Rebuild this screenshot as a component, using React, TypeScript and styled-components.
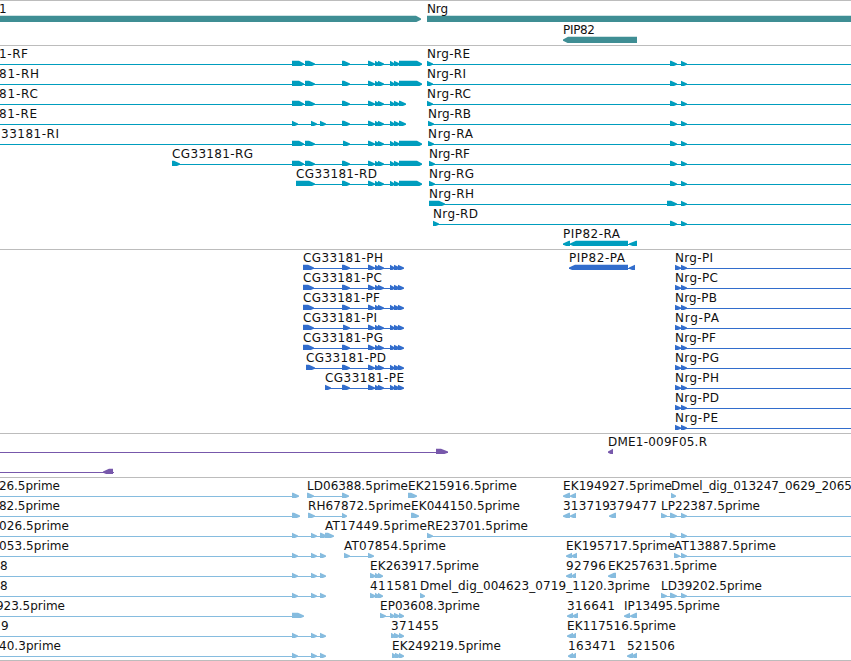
import React from "react";
import styled, { createGlobalStyle } from "styled-components";

const GlobalStyle = createGlobalStyle`
  body {
    margin: 0;
    background: #ffffff;
    overflow: hidden;
  }
`;
const Browser = styled.main`
  display: flex;
  flex-direction: column;
  width: 851px;
  height: 660px;
  overflow: hidden;
  border-bottom: 1px solid #bcbcbc;
`;
const Track = styled.section<{ $color: string; $pad: number }>`
  display: flex;
  flex-direction: column;
  border-top: 1px solid #bcbcbc;
  padding-bottom: ${(p) => p.$pad}px;
  color: ${(p) => p.$color};
`;
const Row = styled.svg<{ $height: number }>`
  display: block;
  width: 851px;
  height: ${(p) => p.$height}px;
  fill: currentColor;
`;
const Label = styled.text`
  font-family: "DejaVu Sans", sans-serif;
  font-size: 12px;
  fill: #111111;
`;

// start, end, optional length of the arrow head
type Span = number[];

type Feature = {
  label?: string;
  at?: number[];
  line?: number[];
  spans: Span[];
  left?: boolean;
};

type TrackData = {
  name: string;
  color: string;
  rowHeight: number;
  pad: number;
  rows: Feature[][];
};

const END = 860;

const feat = (label: string, from: number, to: number, spans: Span[], line?: number[], left = false): Feature => ({
  label,
  at: [from, to],
  spans,
  line,
  left,
});

const cluster = [[368, 375], [375, 380], [378, 384]];
const tail = [[390, 395], [394, 400]];
const utr = [399, 422, 5];
const first = [[292, 304, 5], [305, 315, 6]];
const mid = [342, 350];
const pair = [[670, 677], [681, 687]];
const full = [...first, mid, ...cluster, ...tail, utr];

const rna = (name: string, x: number, end: number, spans: Span[]) =>
  feat(name, x, end, spans, [0, spans[spans.length - 1][1] - 2]);
const nrg = (name: string, x: number, width: number, spans: Span[] = pair) =>
  feat(name, x, x + width, [[x, x + 6], ...spans], [x, END]);

const cdsTail = [...cluster, [390, 395], [394, 400], [398, 404]];
const cds = (name: string, x: number, end: number, head: number[], m = mid) =>
  feat(name, x, end, [head, m, ...cdsTail], [x, 402]);
const nrgCds = (name: string, end: number) =>
  feat(name, 675, end, [[675, 681], [681, 687]], [675, END]);

const est = [[292, 298], [311, 317], [320, 326]];
const edge = (name: string, x: number, end: number, spans: Span[] = est) =>
  feat(name, x, end, spans, [0, spans[spans.length - 1][1] - 1]);
const back = (name: string, x: number, end: number, spans: Span[]) =>
  feat(name, x, end, spans, undefined, true);

const tracks: TrackData[] = [
  {
    name: "genes",
    color: "#3f8e94",
    rowHeight: 21,
    pad: 2,
    rows: [
      [feat("1", -1, 7, [[0, 421, 5]]), feat("Nrg", 427, 448, [[427, END]])],
      [back("PIP82", 563, 595, [[563, 637, 5]])],
    ],
  },
  {
    name: "transcripts",
    color: "#009dbe",
    rowHeight: 20,
    pad: 3,
    rows: [
      [rna("1-RF", -1, 28, full), nrg("Nrg-RE", 427, 43)],
      [rna("81-RH", -1, 39, full), nrg("Nrg-RI", 427, 39)],
      [rna("81-RC", -1, 38, [...first, mid, ...cluster, ...tail, [399, 406]]), nrg("Nrg-RC", 427, 44)],
      [rna("81-RE", -1, 37, [...est, mid, ...cluster, ...tail, [399, 406]]), nrg("Nrg-RB", 428, 43)],
      [rna("33181-RI", 1, 59, [...first, [343, 350], ...cluster, ...tail, utr]), nrg("Nrg-RA", 428, 45)],
      [
        feat("CG33181-RG", 172, 253, [[172, 180], ...full], [172, 420]),
        nrg("Nrg-RF", 429, 41),
      ],
      [
        feat("CG33181-RD", 296, 377, [[296, 315, 6], mid, ...cluster, ...tail, utr], [296, 420]),
        nrg("Nrg-RG", 429, 45),
      ],
      [feat("Nrg-RH", 429, 474, [[429, 445], [667, 677], [681, 687]], [429, END])],
      [nrg("Nrg-RD", 433, 45)],
      [feat("PIP82-RA", 563, 620, [[563, 570], [570, 628], [629, 637, 7]], [563, 632], true)],
    ],
  },
  {
    name: "cds",
    color: "#326dcc",
    rowHeight: 20,
    pad: 3,
    rows: [
      [
        cds("CG33181-PH", 303, 383, [303, 314]),
        feat("PIP82-PA", 569, 625, [[569, 628], [629, 635]], [569, 632], true),
        nrgCds("Nrg-PI", 713),
      ],
      [cds("CG33181-PC", 303, 382, [303, 314]), nrgCds("Nrg-PC", 718)],
      [cds("CG33181-PF", 303, 380, [303, 314]), nrgCds("Nrg-PB", 717)],
      [cds("CG33181-PI", 303, 377, [303, 314], [343, 350]), nrgCds("Nrg-PA", 719)],
      [cds("CG33181-PG", 303, 383, [303, 314]), nrgCds("Nrg-PF", 716)],
      [cds("CG33181-PD", 306, 386, [306, 315]), nrgCds("Nrg-PG", 719)],
      [cds("CG33181-PE", 325, 404, [325, 331]), nrgCds("Nrg-PH", 719)],
      [nrgCds("Nrg-PD", 719)],
      [nrgCds("Nrg-PE", 718)],
    ],
  },
  {
    name: "insertions",
    color: "#7758ab",
    rowHeight: 20,
    pad: 3,
    rows: [
      [
        { spans: [[436, 448, 7]], line: [0, 448] },
        back("DME1-009F05.R", 608, 707, [[608, 613]]),
      ],
      [{ spans: [[103, 113, 6]], line: [0, 114], left: true }],
    ],
  },
  {
    name: "ests",
    color: "#86bcdf",
    rowHeight: 20,
    pad: 2,
    rows: [
      [
        edge("26.5prime", -1, 60, [[292, 299]]),
        feat("LD06388.5prime", 307, 408, [[307, 314], [342, 349]], [307, 346]),
        feat("EK215916.5prime", 408, 517, [[408, 417]]),
        back("EK194927.5prime", 563, 672, [[563, 570], [570, 576]]),
        feat("Dmel_dig_013247_0629_2065", 671, 852, [[671, 676]]),
      ],
      [
        edge("82.5prime", -1, 60, [[292, 300]]),
        feat("RH67872.5prime", 308, 411, [[308, 315], [342, 347]], [308, 346]),
        feat("EK044150.5prime", 411, 520, [[411, 419]]),
        back("313719", 563, 610, [[563, 570], [570, 576]]),
        back("379477", 609, 657, [[609, 616]]),
        feat("LP22387.5prime", 661, 760, [[661, 667], ...pair], [661, END]),
      ],
      [
        edge("026.5prime", -1, 69, [[292, 298], [311, 317], [320, 327], [325, 334]]),
        feat("AT17449.5prime", 325, 427, []),
        feat("RE23701.5prime", 427, 528, [[427, 433], ...pair], [427, END]),
      ],
      [
        edge("053.5prime", -1, 69),
        feat("AT07854.5prime", 344, 446, [[344, 350], [368, 374]], [344, 372]),
        back("EK195717.5prime", 566, 675, [[566, 572], [571, 577]]),
        feat("AT13887.5prime", 674, 776, [[674, 680], [681, 687]], [674, END]),
      ],
      [
        edge("8", 0, 8),
        feat("EK263917.5prime", 370, 479, [[370, 376], [375, 380], [378, 383]]),
        back("92796", 566, 606, [[566, 572], [571, 576]]),
        back("EK257631.5prime", 608, 717, [[608, 616]]),
      ],
      [
        edge("8", 0, 8),
        feat("411581", 370, 418, [[370, 376], [375, 380], [378, 383]]),
        feat("Dmel_dig_004623_0719_1120.3prime", 420, 650, [[420, 425]]),
        feat("LD39202.5prime", 661, 762, [[661, 667], ...pair], [661, END]),
      ],
      [
        edge("923.5prime", -4, 65, [[292, 304]]),
        feat("EP03608.3prime", 380, 480, [[380, 386], [390, 395], [394, 400], [399, 404]], [380, 402]),
        back("316641", 567, 615, [[567, 573], [572, 578]]),
        back("IP13495.5prime", 624, 720, [[624, 630], [630, 637]]),
      ],
      [
        edge("9", 1, 9),
        feat("371455", 391, 439, [[391, 396], [394, 400], [399, 404]]),
        back("EK117516.5prime", 567, 676, [[567, 573], [571, 576]]),
      ],
      [
        edge("40.3prime", -1, 61),
        feat("EK249219.5prime", 392, 501, [[392, 397], [395, 401], [399, 404]]),
        back("163471", 568, 616, [[568, 573], [571, 576]]),
        back("521506", 627, 675, [[627, 633], [631, 637]]),
      ],
    ],
  },
];

const Arrow = ({ span, left }: { span: Span; left?: boolean }) => {
  const [start, end, head = 6] = span;
  const h = Math.min(head, end - start);
  const points = left
    ? `${end},14.8 ${start + h},14.8 ${start},17.5 ${start},18.7 ${start + h},21.2 ${end},21.2`
    : `${start},14.8 ${end - h},14.8 ${end},17.5 ${end},18.7 ${end - h},21.2 ${start},21.2`;
  return <polygon points={points} />;
};

const FeatureGlyph = ({ feature }: { feature: Feature }) => {
  const { label, at, line, spans, left } = feature;
  return (
    <g>
      {line && <rect x={line[0]} y={18} width={line[1] - line[0]} height={1} />}
      {spans.map((span, i) => (
        <Arrow key={i} span={span} left={left} />
      ))}
      {label && at && (
        <Label x={at[0]} y={12} textLength={at[1] - at[0]}>
          {label}
        </Label>
      )}
    </g>
  );
};

const App = () => {
  return (
    <Browser>
      <GlobalStyle />
      {tracks.map((track) => (
        <Track key={track.name} $color={track.color} $pad={track.pad}>
          {track.rows.map((row, i) => (
            <Row key={i} $height={track.rowHeight}>
              {row.map((feature, j) => (
                <FeatureGlyph key={j} feature={feature} />
              ))}
            </Row>
          ))}
        </Track>
      ))}
    </Browser>
  );
};

export default App;
